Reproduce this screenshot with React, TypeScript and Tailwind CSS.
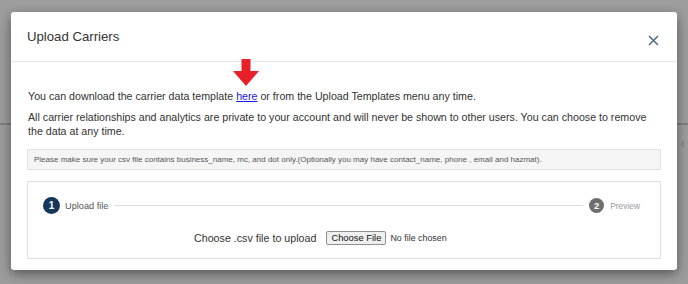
import React from 'react';

const StepDot = ({ n, active }: { n: number; active: boolean }) => (
  <span
    className={`flex shrink-0 items-center justify-center rounded-full font-bold leading-none text-white ${
      active ? 'h-[17px] w-[17px] bg-[#15375b] text-[10px]' : 'h-[15px] w-[15px] bg-[#6e6e6e] text-[9.5px]'
    }`}
  >
    {n}
  </span>
);

export default function App() {
  return (
    <div className="relative h-[284px] w-[688px] overflow-hidden bg-[#9d9d9d] font-['Liberation_Sans',Arial,sans-serif]">
      {/* page behind the overlay */}
      <div className="absolute left-0 right-0 top-[123px] h-[2px] bg-[#7f7f7f]" />
      <div className="absolute right-[3px] top-[136px] text-[14px] leading-none text-[#7a7a7a]">‹</div>

      <div className="relative pl-[11px] pt-[12px]">
        <div className="flex h-[258px] w-[666px] flex-col rounded-[3px] bg-white shadow-[0_4px_12px_rgba(0,0,0,0.45)]">
          {/* Header */}
          <div className="flex h-[50px] shrink-0 items-center justify-between border-b border-[#e5e5e5] pl-[16px] pr-[18px]">
            <h4 className="text-[13.2px] text-[#333]">Upload Carriers</h4>
            <svg width="11" height="11" viewBox="0 0 11 11" className="mt-[8px]">
              <path d="M1 1L10 10M10 1L1 10" stroke="#4d6a8a" strokeWidth="1.5" fill="none" />
            </svg>
          </div>

          {/* Body */}
          <div className="flex flex-1 flex-col px-[16px] pb-[11px] text-[10.66px] leading-[14px] text-[#333]">
            <p className="relative mt-[27px] pl-[1px]">
              You can download the carrier data template{' '}
              <span className="relative">
                <a className="text-[#2020e0] underline">here</a>
                <svg width="28" height="27" viewBox="0 0 28 27" className="absolute left-[-4px] top-[-31px]">
                  <path d="M9.5 0H18.5V12H27L14 27L1 12H9.5Z" fill="#e8202a" />
                </svg>
              </span>{' '}
              or from the Upload Templates menu any time.
            </p>
            <p className="mt-[7px] pl-[1px]">
              All carrier relationships and analytics are private to your account and will never be shown to other users. You can
              choose to remove the data at any time.
            </p>

            <div className="mt-[11px] flex h-[21px] items-center border border-[#e3e3e3] bg-[#f5f5f5] pl-[6px] text-[8px] text-[#555]">
              Please make sure your csv file contains business_name, mc, and dot only.(Optionally you may have contact_name, phone ,
              email and hazmat).
            </div>

            <div className="mt-[11px] flex flex-1 flex-col border border-[#e0e0e0] pl-[15px] pr-[20px]">
              <div className="mt-[15px] flex items-center">
                <StepDot n={1} active />
                <span className="ml-[5px] text-[9.2px] text-[#555]">Upload file</span>
                <div className="ml-[6px] mr-[6px] h-px flex-1 bg-[#dedede]" />
                <StepDot n={2} active={false} />
                <span className="ml-[6px] text-[8.4px] text-[#9a9a9a]">Preview</span>
              </div>
              <div className="ml-[151px] mt-[17px] flex items-center text-[#333]">
                <span className="text-[10.7px]">Choose .csv file to upload</span>
                <span className="ml-[10px] flex h-[14px] items-center rounded-[2px] border border-[#8f8f8f] bg-[#efefef] px-[4px] text-[9.4px] text-[#111]">
                  Choose File
                </span>
                <span className="ml-[4px] text-[8.9px] text-[#333]">No file chosen</span>
              </div>
            </div>
          </div>
        </div>
      </div>
    </div>
  );
}
